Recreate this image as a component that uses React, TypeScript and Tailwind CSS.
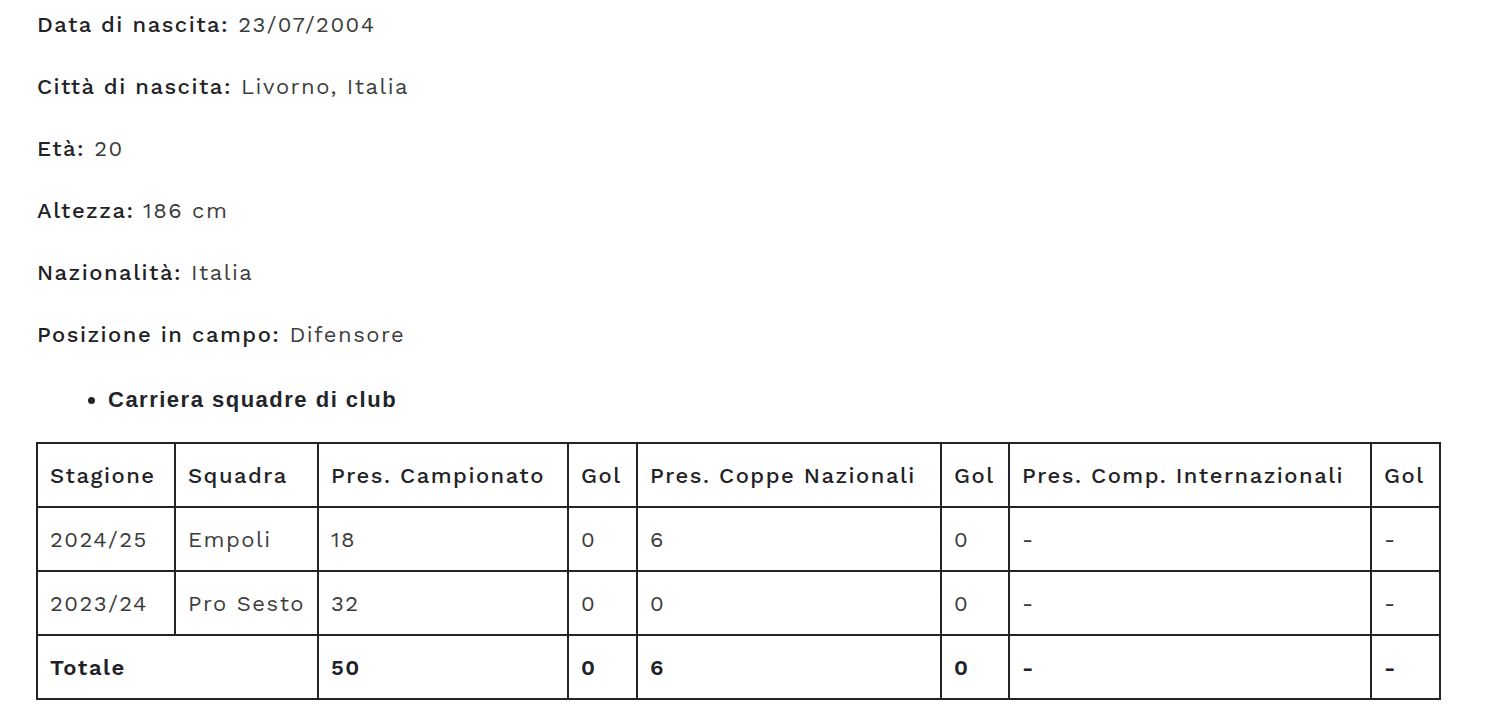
const info: Array<[string, string]> = [
  ["Data di nascita:", "23/07/2004"],
  ["Città di nascita:", "Livorno, Italia"],
  ["Età:", "20"],
  ["Altezza:", "186 cm"],
  ["Nazionalità:", "Italia"],
  ["Posizione in campo:", "Difensore"],
];

const cols = [
  { label: "Stagione", w: "w-[138px]" },
  { label: "Squadra", w: "w-[143px]" },
  { label: "Pres. Campionato", w: "w-[250px]" },
  { label: "Gol", w: "w-[69px]" },
  { label: "Pres. Coppe Nazionali", w: "w-[304px]" },
  { label: "Gol", w: "w-[68px]" },
  { label: "Pres. Comp. Internazionali", w: "w-[362px]" },
  { label: "Gol", w: "w-[69px]" },
];

const rows = [
  ["2024/25", "Empoli", "18", "0", "6", "0", "-", "-"],
  ["2023/24", "Pro Sesto", "32", "0", "0", "0", "-", "-"],
];

const totale = ["50", "0", "6", "0", "-", "-"];

const cell = "border-2 border-[#212529] px-3 h-[64px] text-left align-middle whitespace-nowrap";

export default function App() {
  return (
    <div className="min-h-screen bg-white pl-[37px] pt-[10px] text-[#212529] font-['Work_Sans','Open_Sans',sans-serif]">
      {info.map(([k, v]) => (
        <p key={k} className="text-[22px] leading-[30px] mb-[32px] tracking-[1.5px]">
          <span className="font-medium text-[#1f2226]">{k}</span>{" "}
          <span className="text-[#3d3d3d]">{v}</span>
        </p>
      ))}

      <ul className="list-disc pl-[71px] pt-[3px] mb-[27px]">
        <li className="text-[22px] leading-[30px] font-bold tracking-[1.5px] font-['Liberation_Sans',Arial,sans-serif]">
          Carriera squadre di club
        </li>
      </ul>

      <table className="-ml-px table-fixed border-collapse w-[1403px] text-[22px] tracking-[1.5px]">
        <thead>
          <tr>
            {cols.map((c, i) => (
              <th key={i} className={`${cell} ${c.w} font-medium text-[#1f2226]`}>{c.label}</th>
            ))}
          </tr>
        </thead>
        <tbody>
          {rows.map((r) => (
            <tr key={r[0]}>
              {r.map((v, i) => (
                <td key={i} className={`${cell} text-[#3d3d3d]`}>{v}</td>
              ))}
            </tr>
          ))}
          <tr className="font-semibold text-[#1f2226]">
            <td colSpan={2} className={cell}>Totale</td>
            {totale.map((v, i) => (
              <td key={i} className={cell}>{v}</td>
            ))}
          </tr>
        </tbody>
      </table>
    </div>
  );
}
